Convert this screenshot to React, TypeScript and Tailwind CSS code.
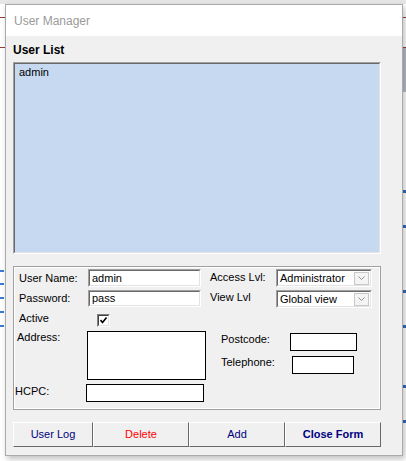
import React from "react";

const font = { fontFamily: '"Liberation Sans", Arial, sans-serif' };

function Sunken({ w, h, children }: { w: string; h: string; children?: React.ReactNode }) {
  return (
    <div className={`${w} ${h} border-t border-l border-[#a0a0a0] border-r border-b border-r-white border-b-white`}>
      <div className="w-full h-full border-t border-l border-[#696969] border-r border-b border-r-[#e3e3e3] border-b-[#e3e3e3] bg-white flex items-center pl-[2px] text-[11px] text-black overflow-hidden">
        {children}
      </div>
    </div>
  );
}

function Flat({ w, h }: { w: string; h: string }) {
  return <div className={`${w} ${h} border border-black bg-white`} />;
}

function Select({ value }: { value: string }) {
  return (
    <div className="w-[96px] h-[18px] border-t border-l border-[#a0a0a0] border-r border-b border-r-white border-b-white">
      <div className="w-full h-full border-t border-l border-[#696969] border-r border-b border-r-[#e3e3e3] border-b-[#e3e3e3] bg-white flex items-center">
        <span className="flex-1 pl-[2px] text-[11px] text-black">{value}</span>
        <div className="w-[15px] h-[13px] mr-[1px] border border-[#c8c8c8] bg-[#f4f4f4] flex items-center justify-center">
          <svg width="7" height="4" viewBox="0 0 7 4">
            <path d="M0.5 0.5 L3.5 3.5 L6.5 0.5" stroke="#909090" strokeWidth="1" fill="none" />
          </svg>
        </div>
      </div>
    </div>
  );
}

function Btn({ children, cls, first }: { children: React.ReactNode; cls: string; first?: boolean }) {
  return (
    <button
      className={`${first ? "w-[80px]" : "w-[96px]"} h-[25px] bg-[#f0f0f0] border-t border-l border-white border-r border-b border-r-[#696969] border-b-[#696969] text-[11px] ${cls}`}
      style={font}
    >
      {children}
    </button>
  );
}

export default function App() {
  return (
    <div className="relative w-[406px] h-[461px] bg-white overflow-hidden" style={font}>
      {/* background fragments */}
      <div className="absolute left-0 top-0 w-[406px] h-[4px] bg-[#e6e6e6]" />
      <div className="absolute left-0 top-[17px] w-[5px] h-px bg-[#9b3b3b]" />
      <div className="absolute left-0 top-[47px] w-[5px] h-px bg-[#9b3b3b]" />
      <div className="absolute right-0 top-[17px] w-[3px] h-px bg-[#9b3b3b]" />
      <div className="absolute right-0 top-[47px] w-[3px] h-px bg-[#9b3b3b]" />
      <div className="absolute right-0 top-[48px] w-[3px] h-[44px] bg-[#b8bcc8]" />
      <div className="absolute left-0 top-[270px] w-[4px] h-[2px] bg-[#3a7bd5]" />
      <div className="absolute left-0 top-[283px] w-[4px] h-[2px] bg-[#3a7bd5]" />
      <div className="absolute left-0 top-[297px] w-[4px] h-[2px] bg-[#3a7bd5]" />
      <div className="absolute left-0 top-[311px] w-[4px] h-[2px] bg-[#3a7bd5]" />
      <div className="absolute left-0 top-[325px] w-[4px] h-[2px] bg-[#3a7bd5]" />
      <div className="absolute right-0 top-[190px] w-[3px] h-[3px] bg-[#2f6dc0]" />
      <div className="absolute right-0 top-[225px] w-[3px] h-[3px] bg-[#2f6dc0]" />
      <div className="absolute right-0 top-[290px] w-[3px] h-[3px] bg-[#2f6dc0]" />
      <div className="absolute right-0 top-[325px] w-[3px] h-[3px] bg-[#2f6dc0]" />
      <div className="absolute right-0 top-[385px] w-[3px] h-[3px] bg-[#2f6dc0]" />
      <div className="absolute right-0 top-[420px] w-[3px] h-[3px] bg-[#2f6dc0]" />

      {/* dialog */}
      <div className="relative mt-[4px] ml-[5px] w-[398px] border border-[#aaaaaa] shadow-[2px_3px_6px_rgba(0,0,0,0.25)]">
        <div className="h-[31px] bg-white flex items-center pl-[8px] text-[12px] text-[#9a9a9a]">User Manager</div>
        <div className="bg-[#f0f0f0] pl-[7px] pt-[7px] pb-[8px]">
          <div className="text-[12px] font-bold leading-[14px] text-black">User List</div>
          {/* list */}
          <div className="mt-[5px] w-[368px] h-[192px] border-t border-l border-[#a0a0a0] border-r border-b border-r-white border-b-white">
            <div className="w-full h-full border-t border-l border-[#696969] border-r border-b border-r-[#e3e3e3] border-b-[#e3e3e3] bg-[#c6d9f0] pl-[4px] pt-[2px] text-[11px] leading-[13px] text-black">
              admin
            </div>
          </div>

          {/* group box */}
          <div className="mt-[12px] w-[368px] border border-[#a0a0a0]">
            <div className="border border-white pt-[1px] pb-[6px] text-[11px] leading-[13px] text-black">
              <div className="flex items-start h-[18px]">
                <span className="ml-[4px] w-[69px] mt-[3px]">User Name:</span>
                <Sunken w="w-[113px]" h="h-[18px]">admin</Sunken>
                <span className="ml-[9px] w-[66px] mt-[2px]">Access Lvl:</span>
                <Select value="Administrator" />
              </div>
              <div className="flex items-start h-[17px] mt-[3px]">
                <span className="ml-[4px] w-[69px] mt-[2px]">Password:</span>
                <Sunken w="w-[113px]" h="h-[17px]">pass</Sunken>
                <span className="ml-[9px] w-[66px] mt-[1px]">View Lvl</span>
                <Select value="Global view" />
              </div>
              <div className="flex items-start h-[16px] mt-[4px]">
                <span className="ml-[4px] w-[78px] mt-[1px]">Active</span>
                <div className="mt-[3px] w-[13px] h-[13px] border-t border-l border-[#808080] border-r border-b border-r-white border-b-white">
                  <div className="w-full h-full border-t border-l border-[#404040] border-r border-b border-r-[#e3e3e3] border-b-[#e3e3e3] bg-white flex items-center justify-center">
                    <svg width="7" height="7" viewBox="0 0 7 7">
                      <path d="M0.5 3 L2.5 5.5 L6.5 0.5" stroke="#000" strokeWidth="1.6" fill="none" />
                    </svg>
                  </div>
                </div>
              </div>
              <div className="flex items-start mt-[4px] h-[49px]">
                <span className="ml-[2px] w-[70px] mt-[0px]">Address:</span>
                <Flat w="w-[119px]" h="h-[49px]" />
                <div className="ml-[15px] flex flex-col">
                  <div className="flex items-start mt-[2px]">
                    <span className="w-[69px] mt-[0px]">Postcode:</span>
                    <Flat w="w-[67px]" h="h-[18px]" />
                  </div>
                  <div className="flex items-start mt-[5px]">
                    <span className="w-[71px] mt-[0px]">Telephone:</span>
                    <Flat w="w-[62px]" h="h-[18px]" />
                  </div>
                </div>
              </div>
              <div className="flex items-start mt-[4px] h-[18px]">
                <span className="w-[71px] mt-[1px]">HCPC:</span>
                <Flat w="w-[118px]" h="h-[18px]" />
              </div>
            </div>
          </div>

          {/* buttons */}
          <div className="mt-[12px] flex">
            <Btn first cls="text-[#000080]">User Log</Btn>
            <Btn cls="text-[#ff0000]">Delete</Btn>
            <Btn cls="text-[#000080]">Add</Btn>
            <Btn cls="text-[#000080] font-bold">Close Form</Btn>
          </div>
        </div>
      </div>
    </div>
  );
}
